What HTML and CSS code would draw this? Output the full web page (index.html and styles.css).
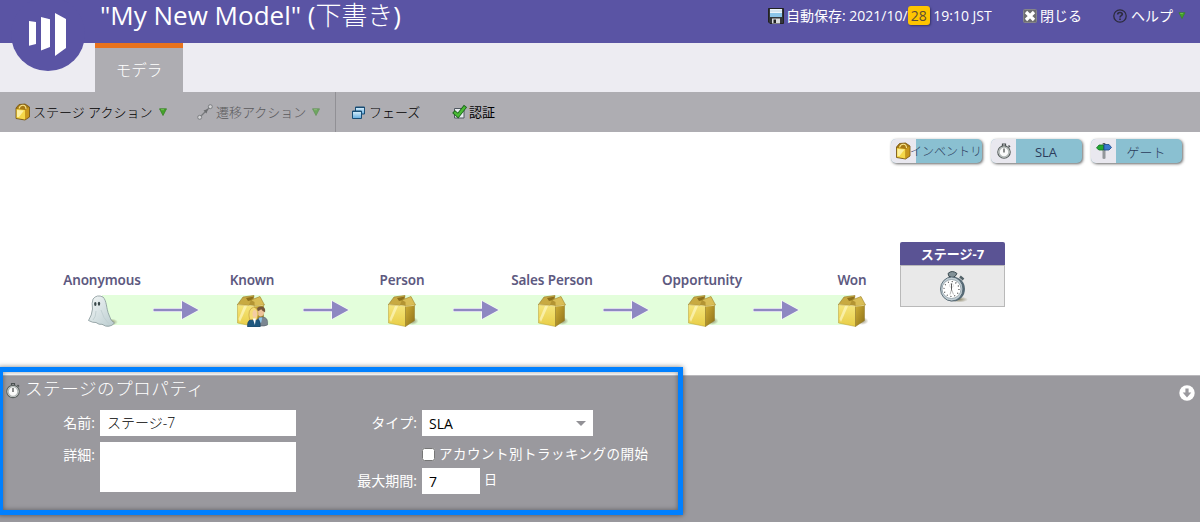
FILE: index.html
```html
<!DOCTYPE html>
<html lang="ja">
<head>
<meta charset="utf-8">
<title>My New Model</title>
<link rel="stylesheet" href="styles.css">
</head>
<body>
<svg class="defs" width="0" height="0" aria-hidden="true">
  <defs>
    <linearGradient id="gold" x1="0" y1="0" x2="0" y2="1"><stop offset="0" stop-color="#f6e67d"/><stop offset="1" stop-color="#e8cd45"/></linearGradient>
    <linearGradient id="side" x1="0" y1="0" x2="1" y2="1"><stop offset="0" stop-color="#d0ae35"/><stop offset="1" stop-color="#8d7119"/></linearGradient>
    <linearGradient id="ghostFill" x1="0" y1="0" x2="1" y2="1"><stop offset="0" stop-color="#f4f7f7"/><stop offset="1" stop-color="#b9cccf"/></linearGradient>
    <linearGradient id="pane" x1="0" y1="0" x2="0" y2="1"><stop offset="0" stop-color="#e1f3fc"/><stop offset="1" stop-color="#63ade0"/></linearGradient>
    <radialGradient id="shade"><stop offset="0" stop-color="#504614" stop-opacity=".6"/><stop offset="1" stop-color="#504614" stop-opacity="0"/></radialGradient>
  </defs>
  <symbol id="box" viewBox="0 0 32 32">
    <ellipse cx="25" cy="26" rx="6.500" ry="4" fill="url(#shade)"/>
    <path d="M1.500 9.500 18.500 11 18.500 31.500 1.500 28Z" fill="url(#gold)" stroke="#b79c38" stroke-width=".5"/>
    <path d="M18.500 11 27.500 10 27.500 25.500 18.500 31.500Z" fill="url(#side)" stroke="#8f7424" stroke-width=".5"/>
    <path d="M7 2 18 .5 17 6 13 10.500 1.500 9.500Z" fill="#c8aa42" stroke="#937725" stroke-width=".6"/>
    <path d="M10 3 18 1.500 16 5 12 6Z" fill="#8d701b"/>
    <path d="M15 5 24 1.500 28.500 10 18.500 11Z" fill="#d9bd55" stroke="#9c8128" stroke-width=".6"/>
    <path d="M15 5 18.500 7 18.500 11 13 10Z" fill="#b39433"/>
    <path d="M2.500 24 8 11 11 11.300 4 27Z" fill="#fffbd0" opacity=".6"/>
    <path d="M2 9.800 18.500 11.300 27.500 10.300" fill="none" stroke="#f5e8a0" stroke-width=".7"/>
  </symbol>
  <symbol id="bag" viewBox="0 0 16 18">
    <path d="M1 5 4 1.500 10 1 14.500 4 14.500 14 10 17 1 15.500Z" fill="#a87a14" stroke="#73530e" stroke-width=".8"/>
    <path d="M1.500 6 10 7 10 16.500 1.500 15Z" fill="#f5d849"/>
    <path d="M2 7 9 7.600 4 14 2 14Z" fill="#fdf0a0"/>
    <path d="M10 7 14 4.300 14 13.700 10 16.500Z" fill="#c8981d"/>
    <path d="M4 5.500Q5 2 8 2.200T11 6" fill="none" stroke="#f7e48c" stroke-width="1.100"/>
  </symbol>
  <symbol id="ghost" viewBox="0 0 32 32">
    <ellipse cx="24" cy="27" rx="7" ry="3.500" fill="url(#shade)"/>
    <path d="M6 4Q10-1 16 2C20 6 19 13 22 20Q23.500 26 27.500 28Q25 31 22 31.200Q19 32 15 29.300Q12 30 9 27.500Q6 28 1.500 25.500Q5 20 5.500 14Q4.500 8 6 4Z" fill="url(#ghostFill)" stroke="#859698" stroke-width=".8"/>
    <ellipse cx="8.300" cy="9" rx="1.200" ry="2" fill="#394749"/><ellipse cx="12" cy="8.700" rx="1.200" ry="2" fill="#394749"/>
    <path d="M14 15Q16 23 22 29M9 16Q9 22 6 25" fill="none" stroke="#c2d0d2"/>
  </symbol>
  <symbol id="people" viewBox="0 0 20 20">
    <path d="M9 18.500Q9 10.500 15 10.500T20 18Q17 19.500 13 19Z" fill="#7b8691" stroke="#56616b" stroke-width=".6"/>
    <ellipse cx="13.500" cy="5.500" rx="3.600" ry="4.500" fill="#edc39a"/>
    <path d="M9.700 5Q9.500.3 14 .5T17.700 6Q15 5 14 3Q12 5 9.700 5Z" fill="#74553a"/>
    <path d="M12 11 15 11 14 16 12 16Z" fill="#8fc7eb"/>
    <path d="M1 20Q0 13 7 12T13 20Z" fill="#1f587f" stroke="#173e5a" stroke-width=".5"/>
    <path d="M3 13Q.5 3 7 1Q13 3 10 13Z" fill="#f5dc74" stroke="#b28b35" stroke-width=".5"/>
    <ellipse cx="7.800" cy="7.500" rx="2.100" ry="3.600" fill="#f4cda4"/>
    <path d="M6 12 9 12 8 18Z" fill="#fff"/>
  </symbol>
  <symbol id="watch" viewBox="0 0 16 16">
    <path d="M6.500 3 6.500 1 9.500 1 9.500 3" fill="none" stroke="#4a5051" stroke-width="1.200"/>
    <path d="M12.500 2.500 14 4" stroke="#4a5051" stroke-width="1.500"/>
    <circle cx="8" cy="9" r="6.200" fill="#fafafa" stroke="#59605f" stroke-width="1.200"/>
    <circle cx="8" cy="9" r="4.900" fill="none" stroke="#b2b8b7" stroke-width="1.300"/>
    <path d="M8 5.500V9.500" stroke="#2c3030" stroke-width="1.100"/>
  </symbol>
  <symbol id="stopwatch" viewBox="0 0 32 32">
    <ellipse cx="22" cy="29" rx="9" ry="3" fill="url(#shade)"/>
    <path d="M11 3Q15-1 20 3L18 6 17 6 17 9 13.500 9 13.500 6 12 6Z" fill="#829197" stroke="#3b4a50"/>
    <path d="M23 6 26.500 9" stroke="#526167" stroke-width="2.500"/>
    <ellipse cx="16" cy="18.500" rx="12" ry="12.300" fill="#566a75"/>
    <ellipse cx="14.700" cy="18.500" rx="11.200" ry="12" fill="#c3cfd5" stroke="#485b66" stroke-width=".8"/>
    <circle cx="14.500" cy="18.500" r="9.500" fill="#fff" stroke="#8c9ba3" stroke-width=".8"/>
    <circle cx="14.500" cy="18.500" r="7.500" fill="none" stroke="#444" stroke-width="1.200" stroke-dasharray="1 2.927"/>
    <circle cx="14.500" cy="15" r="2" fill="none" stroke="#ccc" stroke-width=".6"/>
    <path d="M14.500 13V20" stroke="#4b4b4b" stroke-width=".9"/><path d="M14.500 19 13 24M14.500 19 16.500 24" stroke="#888" stroke-width=".6"/>
  </symbol>
  <symbol id="down" viewBox="0 0 8 8"><path d="M.5.8H7.500L4 7.500Z" fill="#43a22a" stroke="#388426" stroke-width=".8"/><path d="M2 1.700H5" stroke="#7fcb60" stroke-width=".8"/></symbol>
  <symbol id="arrow" viewBox="0 0 48 20">
    <path d="M1 8H29V0L48 10 29 20V12H1Z" fill="#f7f7fb"/><path d="M1.500 8.700H30V1L46.500 10 30 19V11.300H1.500Z" fill="#8e88c2"/>
  </symbol>
</svg>

<header class="topbar">
  <div class="logo">
    <svg width="74" height="74" viewBox="0 0 74 74"><circle cx="37" cy="37" r="37" fill="#5a54a4"/><path d="M18 24 25 25V47L18 48.700ZM30 20 39 22.300V50L30 53.500ZM44 16 55 22V51L44 59Z" fill="#fff"/></svg>
  </div>
  <h1 class="title"><span>"My New Model" (</span><span class="kanji">下書き</span><span>)</span></h1>
  <div class="saved">
    <svg class="disk" width="16" height="16" viewBox="0 0 16 16"><path d="M.5.5H15.500V15.500H2L.5 14Z" fill="#34363a" stroke="#222"/><path d="M2 1H14V9H2Z" fill="#edf5fb"/><path d="M2 5H14V9H2Z" fill="#8bc5e9"/><path d="M2 3H14" stroke="#bdd4e2"/><path d="M4 10.500H12V15.500H4Z" fill="#d9dbdd"/><path d="M5.500 11.500H8V15H5.500Z" fill="#222"/></svg>
    <span class="save-text">自動保存: 2021/10/<mark>28</mark> 19:10 JST</span>
  </div>
  <div class="close">
    <svg width="14" height="14" viewBox="0 0 14 14"><rect x=".5" y=".5" width="13" height="13" rx="1" fill="#6d6d70" stroke="#85858a"/><path d="M3 3 11 11M11 3 3 11" stroke="#fff" stroke-width="3.300"/></svg>
    <span>閉じる</span>
  </div>
  <div class="help">
    <svg width="14" height="14" viewBox="0 0 14 14"><circle cx="7" cy="7" r="6.200" fill="none" stroke="#2c2b3c" stroke-width="1.300"/><path d="M4.700 5.500Q4.700 3.500 7 3.500T9.300 5.300C9.300 6.800 7 6.600 7 8.500" fill="none" stroke="#2c2b3c" stroke-width="1.600"/><path d="M6.200 9.500H7.800V11H6.200Z" fill="#2c2b3c"/></svg>
    <span>ヘルプ</span>
    <svg width="8" height="7"><use href="#down"/></svg>
  </div>
</header>

<nav class="tabs"><div class="tab">モデラ</div></nav>

<div class="toolbar">
  <div class="tool stage-actions"><svg width="16" height="18"><use href="#bag"/></svg><span>ステージ アクション</span><svg class="caret" width="8" height="8"><use href="#down"/></svg></div>
  <div class="tool transitions"><svg width="16" height="16" viewBox="0 0 16 16"><path d="M3 13 13 3" stroke="#55595a" stroke-width="1.200"/><path d="M11 5 9.500 9.500 6.500 6.500Z" fill="#3f4344"/><circle cx="2.700" cy="13.300" r="2" fill="#eee" stroke="#5c6163"/><circle cx="13.300" cy="2.700" r="2" fill="#eee" stroke="#5c6163"/></svg><span>遷移アクション</span><svg class="caret" width="8" height="8"><use href="#down"/></svg></div>
  <div class="tool phases"><svg width="13" height="13" viewBox="0 0 13 13"><path d="M3.500 1H12.500V8H3.500Z" fill="url(#pane)" stroke="#194d75"/><path d="M3.500 1.500H12.500" stroke="#194d75"/><path d="M.5 5H9.500V12.500H.5Z" fill="url(#pane)" stroke="#194d75"/><path d="M.5 5.500H9.500" stroke="#194d75"/></svg><span>フェーズ</span></div>
  <div class="tool validate"><svg width="16" height="16" viewBox="0 0 16 16"><path d="M2.500 4.500H12V14H2.500Z" fill="#e7ebee" stroke="#515861"/><path d="M1.500 7.500 6 11.500 13.500 2" fill="none" stroke="#1a631c" stroke-width="4"/><path d="M2.200 8.200 6 11.500 13 2.700" fill="none" stroke="#4bbb35" stroke-width="2.400"/></svg><span>認証</span></div>
</div>

<main class="canvas">
  <div class="palette">
    <div class="chip"><span class="chip-icon"><svg width="17" height="18"><use href="#bag"/></svg></span><span class="chip-label wide">インベントリ</span></div>
    <div class="chip"><span class="chip-icon"><svg width="16" height="16"><use href="#watch"/></svg></span><span class="chip-label">SLA</span></div>
    <div class="chip"><span class="chip-icon"><svg width="16" height="16" viewBox="0 0 16 16"><path d="M8 0V15.500" stroke="#595d60" stroke-width="2.600"/><path d="M8 1V15" stroke="#ced3d5"/><path d="M.5 5 3 2H7.500V7H3Z" fill="#24aa31" stroke="#116d28" stroke-width=".8"/><path d="M8 1.500H13L15.500 4.500 13 7H8Z" fill="#3978ce" stroke="#174987" stroke-width=".8"/></svg></span><span class="chip-label kana">ゲート</span></div>
  </div>

  <div class="flow">
    <div class="labels"><span>Anonymous</span><span>Known</span><span>Person</span><span>Sales Person</span><span>Opportunity</span><span>Won</span></div>
    <div class="track">
      <div class="node"><svg width="32" height="32"><use href="#ghost"/></svg></div><svg class="link" width="48" height="20"><use href="#arrow"/></svg>
      <div class="node"><svg width="34" height="32"><use href="#box" x="-1" width="32" height="32"/><use href="#people" x="7" y="11" width="26" height="21"/></svg></div><svg class="link" width="48" height="20"><use href="#arrow"/></svg>
      <div class="node"><svg width="32" height="32"><use href="#box"/></svg></div><svg class="link" width="48" height="20"><use href="#arrow"/></svg>
      <div class="node"><svg width="32" height="32"><use href="#box"/></svg></div><svg class="link" width="48" height="20"><use href="#arrow"/></svg>
      <div class="node"><svg width="32" height="32"><use href="#box"/></svg></div><svg class="link" width="48" height="20"><use href="#arrow"/></svg>
      <div class="node"><svg width="32" height="32"><use href="#box"/></svg></div>
    </div>
  </div>

  <div class="stage"><div class="stage-name">ステージ-7</div><div class="stage-body"><svg width="32" height="33"><use href="#stopwatch"/></svg></div></div>
</main>

<section class="properties">
  <div class="props-head"><svg width="16" height="17"><use href="#watch"/></svg><h2>ステージのプロパティ</h2>
    <svg class="collapse" width="16" height="16" viewBox="0 0 16 16"><circle cx="8" cy="8" r="7.700" fill="#fff"/><path d="M6.400 3.500H9.600V7.500H12.300L8 12.500 3.700 7.500H6.400Z" fill="#9a999e"/></svg>
  </div>
  <div class="form">
    <div class="left-fields">
      <label class="row"><span class="caption">名前:</span><span class="field name-field">ステージ-7</span></label>
      <label class="row"><span class="caption">詳細:</span><span class="field detail-field"></span></label>
    </div>
    <div class="right-fields">
      <label class="row"><span class="caption">タイプ:</span><span class="field type-field">SLA<svg width="10" height="5" viewBox="0 0 10 5"><path d="M0 0H10L5 5Z" fill="#929196"/></svg></span></label>
      <label class="check-row"><input type="checkbox"><span>アカウント別トラッキングの開始</span></label>
      <label class="row"><span class="caption">最大期間:</span><span class="field days-field">7</span><span class="unit">日</span></label>
    </div>
  </div>
</section>
<div class="highlight"></div>
</body>
</html>
```

FILE: styles.css
```css
* { box-sizing: border-box; }
body { margin: 0; width: 1200px; height: 522px; overflow: hidden; position: relative; background: #fff; font-family: "Open Sans", "Noto Sans CJK JP", sans-serif; font-size: 13px; color: #000; white-space: nowrap; }
svg { display: block; flex: none; }
.defs { position: absolute; }

.topbar { position: relative; display: flex; height: 43px; background: #5a54a4; color: #fff; }
.logo { position: absolute; left: 11px; top: -3px; z-index: 2; }
.title { margin: 0; padding-left: 100px; width: 768px; height: 43px; font-size: 26px; font-weight: 400; line-height: 31px; display: flex; }
.title span { white-space: pre; }
.kanji { font-weight: 300; letter-spacing: -.1px; }
.saved, .close, .help { display: flex; align-items: center; height: 31px; font-size: 14px; }
.saved { width: 255px; gap: 2px; }
.save-text { letter-spacing: 0; }
.saved mark { display: inline-block; padding: 0 3px; height: 19px; line-height: 19px; border-radius: 3px; background: #fec400; color: #5c4a36; box-shadow: 1px 1px 2px #37336b; }
.close { width: 90px; gap: 3px; }
.help { gap: 4px; }
.saved span, .close span, .help span { margin-top: -1px; }
.help svg:last-child { margin-left: 1px; }

.tabs { height: 49px; padding-left: 95px; background: #edecf2; }
.tab { width: 88px; height: 49px; border-top: 5px solid #e8721c; background: #aeadb2; color: #fff; font-size: 15.5px; font-weight: 300; line-height: 45px; text-align: center; }

.toolbar { display: flex; align-items: center; height: 40px; background: #aeadb2; font-weight: 300; }
.tool { display: flex; align-items: center; height: 40px; gap: 2px; }
.tool span { margin-top: -2px; }
.caret { margin-left: 5px; }
.stage-actions { padding-left: 15px; width: 196px; }
.transitions { padding-left: 1px; width: 140px; gap: 3px; border-right: 1px solid #919095; }
.transitions .caret { margin-left: 3px; }
.transitions > * { opacity: .6; }
.transitions span { opacity: .5; }
.phases { padding-left: 16px; width: 116px; gap: 4px; }
.validate { gap: 1px; font-weight: 400; }

.canvas { position: relative; height: 243px; background: #fff; }
.palette { display: flex; gap: 9px; padding: 7px 0 0 891px; }
.chip { display: flex; width: 91px; height: 24px; border-radius: 5px; overflow: hidden; background: #8ac0d1; box-shadow: 1px 1px 3px #666; }
.chip-icon { width: 25px; display: flex; align-items: center; justify-content: center; background: #e9e8ef; }
.chip-label { flex: 1; min-width: 0; display: flex; justify-content: center; color: #2c3c5c; line-height: 26px; font-size: 13px; padding-right: 6px; }
.chip-label.kana { font-weight: 300; }
.chip-label.wide { padding: 0; margin-left: -6px; justify-content: flex-start; font-size: 12px; font-weight: 300; }
.flow { padding: 107px 0 0 27px; }
.labels { display: flex; height: 25px; color: #5d5980; font-family: "Noto Sans", sans-serif; font-size: 13.5px; font-weight: 600; letter-spacing: -.1px; line-height: 20px; }
.labels span { width: 150px; text-align: center; }
.track { display: flex; align-items: center; height: 32px; padding-left: 60px; background: linear-gradient(#e3fedb, #e3fedb) 75px 0 / 750px 30px no-repeat; }
.node { width: 34px; flex: none; }
.link { margin: 0 37px 2px 31px; }
.stage { position: absolute; left: 900px; top: 110px; width: 105px; height: 65px; }
.stage-name { height: 23px; background: #5a5394; color: #fff; border-radius: 2px 2px 0 0; text-align: center; font-weight: 700; font-size: 13px; line-height: 25px; }
.stage-body { height: 42px; border: 1px solid #b9b9b9; background: #e9e9e9; display: flex; justify-content: center; padding-top: 4px; }

.properties { height: 147px; background: #9a999e; border-top: 1px solid #b9b8bc; color: #fff; }
.props-head { display: flex; align-items: center; height: 34px; padding: 0 5px 8px 5px; gap: 4px; }
.props-head > svg:first-child { margin-top: 2px; }
h2 { margin: -3px 0 0; font-size: 17.5px; font-weight: 300; line-height: 26px; letter-spacing: .6px; }
.collapse { margin-left: auto; margin-top: 7px; }
.form { display: flex; }
.left-fields { width: 345px; display: flex; flex-direction: column; gap: 6px; }
.row { display: flex; height: 26px; font-size: 14px; }
.caption { width: 96px; padding-right: 1px; text-align: right; line-height: 26px; }
.field { background: #fff; color: #000; margin-left: 4px; line-height: 26px; padding-left: 7px; }
.name-field { width: 196px; height: 26px; font-size: 14px; font-weight: 300; }
.detail-field { width: 196px; height: 50px; }
.right-fields .caption { width: 73px; padding: 0 1px 0 0; display: flex; justify-content: flex-end; }
.right-fields .field { margin-left: 4px; }
.type-field { width: 171px; height: 26px; line-height: 27px; display: flex; align-items: center; justify-content: space-between; padding-right: 7px; }
.check-row { display: flex; align-items: center; height: 32px; padding: 4px 0 0 77px; gap: 4px; font-size: 13.5px; letter-spacing: .5px; }
.check-row input { margin: 0; width: 13px; height: 13px; }
.check-row span { margin-top: -2px; }
.right-fields .days-field { width: 58px; height: 26px; line-height: 28px; }
.unit { margin-left: 4px; line-height: 23px; font-size: 13px; }
.highlight { position: absolute; left: -2px; top: 367px; width: 685px; height: 148px; border: 5px solid #0080ff; box-shadow: 0 0 5px rgba(0,0,0,.5), inset 0 0 5px rgba(0,0,0,.4); }
```
